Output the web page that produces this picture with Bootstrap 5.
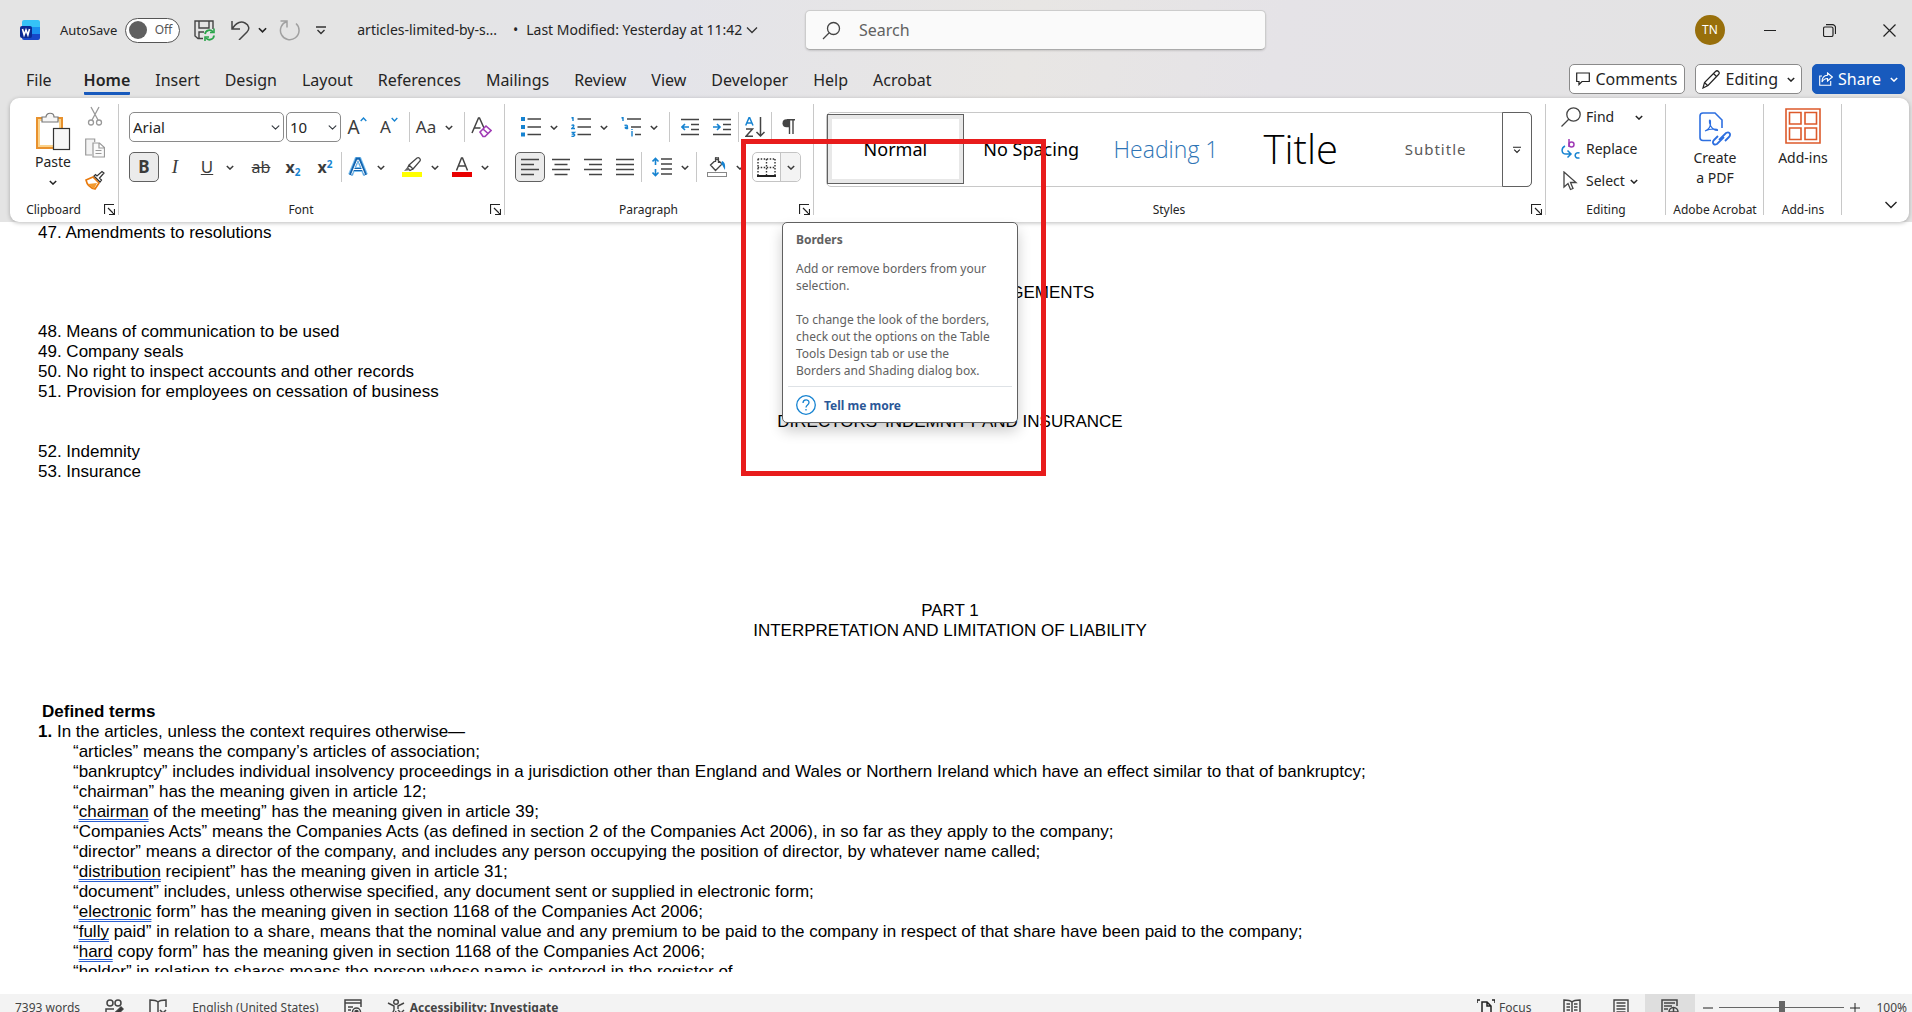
<!DOCTYPE html>
<html lang="en">
<head>
<meta charset="utf-8">
<meta name="viewport" content="width=device-width, initial-scale=1">
<title>Word</title>
<link href="https://cdn.jsdelivr.net/npm/bootstrap@5.3.0/dist/css/bootstrap.min.css" rel="stylesheet">
<style>
:root{--ink:#242424;--line:#c8c8c8;--blue:#1683d1}
body{font-family:"Noto Sans","Open Sans",sans-serif;font-size:14px;line-height:20px;color:var(--ink);background:#fff;overflow:hidden}
button,a.tabl{color:inherit;text-decoration:none}
button{background:none;border:0;padding:0;display:inline-flex;align-items:center;justify-content:center}
svg{display:block;flex:none;fill:none;stroke:#444}
.chrome{background:linear-gradient(100deg,#e4e4e4 0,#e4e4e4 18%,#e4e4e9 35%,#e8e6e4 53%,#e5e3e7 66%,#e3e3e3 92%)}
.titlebar{height:60px}
.title-left{width:42.1%;height:60px;padding-left:20px;white-space:nowrap}
.f13{font-size:13px}
.switchpill{width:55px;height:25px;border:1px solid #555;border-radius:13px;background:#fff;padding:0 7px 0 3px;font-size:12px;color:#555}
.switchpill input{appearance:none;width:18px;height:18px;border-radius:50%;background:#606060;margin:0}
.qat{margin-left:14px;gap:8px}
.filename{margin-left:31px}
.searchbox{width:24.1%;height:40px;margin-top:10px;border:1px solid #ccc;border-bottom-color:#aaa;border-radius:5px;background:#fafafa;padding-left:16px;box-shadow:0 1px 2px #0002}
.searchbox input{border:0;background:none;outline:0;font-size:16px;color:#616161;width:100%}
.searchbox input::placeholder{color:#616161}
.winbtns{gap:47px;height:60px;margin-right:16px}
.avatar{width:30px;height:30px;border-radius:50%;background:#986f0b;color:#fff;font-size:12px;margin-right:-8px}
.tabbar{height:38px;padding:0 7px 0 26px}
.tabl{display:block;font-size:16px;line-height:24px;padding:8px 0 0;border-bottom:3px solid transparent}
.tabs-list{gap:25px}
.tabl.first{margin-right:7px}
.tabl.current{border-bottom-color:#185abd;font-weight:600;border-radius:1px}
.topbtn{height:30px;border:1px solid #8a8a8a;border-radius:5px;background:#fff;font-size:16px;gap:5px;padding:0 6px}
.topbtn.share{background:#185abd;border-color:#185abd;color:#fff}
.topbtn.share svg{stroke:#fff}
.ribbon{margin:0 3px 0 10px;background:#fff;border-radius:9px;height:124px;box-shadow:0 1px 4px #0004}
.grp{position:relative;padding:14px 0 0 10px;display:flex;flex-direction:column}
.grp::after{content:"";position:absolute;right:0;top:6px;height:111px;width:1px;background:var(--line)}
.grp-label{margin-top:auto;height:25px;font-size:12px;line-height:26px;text-align:center;padding-right:10px;white-space:nowrap}
.grp-label.wl{padding-right:32px}
.launch{position:absolute;right:4px;bottom:7px}
.toolrow{display:flex;height:30px;color:#3b3b3b}
.toolrow + .toolrow{margin-top:10px}
.tool{width:32px;height:30px;font-size:19px}
.tool.t17{font-size:17px}
.tool.t16{font-size:16px}
.tool sub,.tool sup{color:#1683d1;font-size:10px}
.chv{width:14px;height:30px}
.sep{width:1px;background:var(--line);height:30px}
.pressed{width:30px;border:1px solid #616161;border-radius:5px;background:#ebebeb}
.combo{height:30px;border:1px solid #8a8a8a;border-radius:5px;font-size:15px;padding:0 18px 0 3px;background-position:right 3px center;background-size:9px 9px;color:var(--ink);line-height:28px}
.w-clip{width:109px}.w-font{width:386px}.w-para{width:309px}.w-edit{width:120px}.w-acro{width:98px}.w-addin{width:78px}.w-end{width:67px}
.combo.face{width:155px}.combo.size{width:55px;margin-left:2px}
.cliprow{margin-top:-6px;padding:0 14px 0 15px}
.gallery{height:75px;border:1px solid var(--line);border-radius:5px;margin-right:14px;display:flex;margin-left:2px}
.gallery .sty{flex:1 1 0;min-width:0;color:#000;font-size:18px;white-space:nowrap;margin:1px 0 2px}
.sty.chosen{border:1px solid #616161;box-shadow:inset 0 0 0 4px #e8e8e8}
.gallery .h1s{font-family:"Open Sans",sans-serif;font-weight:300;font-size:23px;color:#2e74b5}
.gallery .tts{font-family:"Open Sans",sans-serif;font-weight:300;font-size:40px}
.gallery .sbs{font-size:15px;color:#5a5a5a;letter-spacing:1px}
.more{width:30px;border:1px solid #616161;border-radius:0 5px 5px 0;margin:-1px}
.editlist{margin-top:-11px;padding-left:5px}
.editcmd{height:32px;gap:5px;display:flex;justify-content:flex-start}
.tipcard{position:absolute;left:29px;top:69px;width:236px;height:201px;z-index:5;background:#fff;border:1px solid #616161;border-radius:5px;box-shadow:0 8px 14px #0003;font-size:12px;line-height:17px;color:#616161;padding:8px 5px 0}
.tipcard p{margin:0 8px 17px;white-space:nowrap}
.tipcard .tiphead{margin-bottom:12px}
.tipcard .tipend{margin-bottom:7px}
.tiplink{color:#2b5797}
.marker{position:absolute;left:-12px;top:-14px;width:305px;height:337px;border:5px solid #e81c1c;z-index:6;pointer-events:none}
.splitb{position:relative;border:1px solid #c4c4c4;border-radius:5px;display:flex;width:49px;height:30px;margin-left:5px}
.splitb .sp2{border-left:1px solid #c4c4c4;width:20px;background:#f3f3f3;border-radius:0 5px 5px 0}
.splitb .sp1{width:28px}
.docpane{flex:1 1 auto;min-height:0;overflow:hidden;margin-bottom:22px;padding:1px 50px 0 38px;font-family:"Liberation Sans",Arial,sans-serif;font-size:17px;line-height:20px;color:#000}
.docpane p,.docpane h2{margin:0;font-size:17px;line-height:20px;white-space:nowrap;font-weight:400}
.docpane .terms{padding-left:35px}
.gap10{height:10px}.gap20{height:19px}.gap40{height:40px}.gap60{height:61px}.gap120{height:119px}
.gram{text-decoration:underline double #2b5fd0 1px;text-underline-offset:2px;text-decoration-skip-ink:none}
.statusbar{height:18px;overflow:hidden;background:#f3f3f3;flex:none;font-size:12px;color:#444}
.statusin{height:27px;padding:0 5px 0 15px}
.statusin span{white-space:nowrap}
.zoomr{appearance:none;width:125px;height:14px;background:linear-gradient(#666,#666) center/100% 1px no-repeat;margin:0 6px}
.zoomr::-webkit-slider-thumb{appearance:none;width:6px;height:14px;background:#666}
.viewon{background:#dedede;width:50px;height:27px}
.viewgap{margin-left:32px}
.statgap{margin-left:25px}
</style>
</head>
<body class="d-flex flex-column vh-100">
<svg width="0" height="0" class="position-absolute">
<symbol id="cv" viewBox="0 0 10 6"><path d="M1 1l4 4 4-4" stroke-width="1.8" stroke="currentColor" fill="none"/></symbol>
<symbol id="dl" viewBox="0 0 11 11"><path d="M.5 10V.5H10M4 4l6 6M10.500 5v5.500H5" stroke="#222" stroke-width="1.200"/></symbol>
</svg>
<header class="chrome">
 <div class="titlebar d-flex align-items-start">
  <div class="title-left d-flex align-items-center">
   <svg width="20" height="20" viewBox="0 0 20 20"><path d="M4 0h14a2 2 0 012 2v5H2V2a2 2 0 012-2z" fill="#35c3f7" stroke="none"/><path d="M2 7h18v7H2z" fill="#1b90ef" stroke="none"/><path d="M2 14h18v4a2 2 0 01-2 2H4a2 2 0 01-2-2z" fill="#1747c8" stroke="none"/><rect y="6" width="12" height="12" rx="2" fill="#0a2a93" stroke="none"/><path d="M2.500 9l1.600 6L6 10l1.900 5 1.600-6" stroke="#fff" stroke-width="1.600"/></svg>
   <label class="f13 ms-3 ps-1" for="asave">AutoSave</label>
   <label class="switchpill d-flex align-items-center justify-content-between ms-2" for="asave"><input type="checkbox" id="asave">Off</label>
   <div class="qat d-flex align-items-center">
    <button aria-label="Save"><svg width="21" height="21" viewBox="0 0 21 21" stroke-width="1.400"><path d="M9 18.500H4L1 16V1h18v8M5 1v7h10V1M5 18v-6h5"/><path d="M11 14a4.500 4.500 0 018-2M20 15.500a4.500 4.500 0 01-8 2.500" stroke="#2aa54a" stroke-width="1.800"/><path d="M20 8.500v4h-4M11 21v-4h4" stroke="#2aa54a" stroke-width="1.600"/></svg></button>
    <button class="ms-2" aria-label="Undo"><svg width="19" height="20" viewBox="0 0 19 20" stroke-width="1.500"><path d="M1 1v8h8M1 9C5 3 10 1 14 3c4 2 5 6 2 9l-8 8"/></svg></button>
    <button aria-label="Undo list"><svg width="9" height="6"><use href="#cv"/></svg></button>
    <button class="ms-1" aria-label="Redo"><svg width="21" height="21" viewBox="0 0 21 21" style="stroke:#a0a0a0" stroke-width="1.500"><path d="M1.500 1h6.500v6.500M8 1.500A9.300 9.300 0 1017 3.500"/></svg></button>
    <button class="ms-2" aria-label="Customize toolbar"><svg width="10" height="9" viewBox="0 0 10 9"><path d="M0 1h10M1.500 4L5 7.500 8.500 4" stroke="#333" stroke-width="1.400"/></svg></button>
   </div>
   <span class="filename">articles-limited-by-s...</span>
   <span class="ms-3">•</span><span class="ms-2">Last Modified: Yesterday at 11:42</span>
   <svg class="ms-1" width="12" height="8" viewBox="0 0 12 8"><path d="M1 1.500l5 5 5-5" stroke="#333" stroke-width="1.300"/></svg>
  </div>
  <div class="searchbox d-flex align-items-center">
   <svg class="me-3" width="19" height="19" viewBox="0 0 19 19" stroke-width="1.300"><circle cx="11.500" cy="7.500" r="6"/><path d="M7 12l-6 6"/></svg>
   <input type="search" aria-label="Search" placeholder="Search">
  </div>
  <div class="winbtns ms-auto d-flex align-items-center">
   <button class="avatar" aria-label="Account">TN</button>
   <button aria-label="Minimize"><svg width="12" height="13" viewBox="0 0 12 13"><path d="M0 6.500h12" stroke="#222"/></svg></button>
   <button aria-label="Restore"><svg width="13" height="13" viewBox="0 0 13 13"><rect x=".5" y="3" width="9.500" height="9.500" rx="1.500" stroke="#222" stroke-width="1.200"/><path d="M3 .7h6.500a3 3 0 013 3V10" stroke="#222" stroke-width="1.200"/></svg></button>
   <button aria-label="Close"><svg width="13" height="13" viewBox="0 0 13 13"><path d="M.5.5l12 12M12.500.5l-12 12" stroke="#222" stroke-width="1.200"/></svg></button>
  </div>
 </div>
 <div class="tabbar d-flex">
  <nav class="tabs-list d-flex align-items-start">
   <a class="tabl first" href="#">File</a><a class="tabl current" href="#">Home</a><a class="tabl" href="#">Insert</a><a class="tabl" href="#">Design</a><a class="tabl" href="#">Layout</a><a class="tabl" href="#">References</a><a class="tabl" href="#">Mailings</a><a class="tabl" href="#">Review</a><a class="tabl" href="#">View</a><a class="tabl" href="#">Developer</a><a class="tabl" href="#">Help</a><a class="tabl" href="#">Acrobat</a>
  </nav>
  <div class="ms-auto d-flex pt-1" style="gap:10px">
   <button class="topbtn"><svg width="14" height="14" viewBox="0 0 14 14"><path d="M.7 1h12.600v8.500H6L3 12.500v-3H.7z" stroke="#222" stroke-width="1.200"/></svg>Comments</button>
   <button class="topbtn"><svg width="19" height="19" viewBox="0 0 19 19"><path d="M1 18l1.500-5.500L13.500 1.500c1-1 2-1 3 0s1 2 0 3L6 15.500zM11.500 3.500l3.500 3.500M2.500 12.500L6 16" stroke="#222" stroke-width="1.200"/></svg>Editing <svg class="ms-1" width="8" height="5"><use href="#cv"/></svg></button>
   <button class="topbtn share"><svg width="14" height="14" viewBox="0 0 14 14"><path d="M3 4H.7v9.300h11V9M8.500 1l4.800 4-4.800 4V6.500C6 6.500 4 8 3 10c0-4 2-6.500 5.500-6.700z" stroke-width="1.100"/></svg>Share <svg class="ms-1" width="8" height="5"><use href="#cv"/></svg></button>
  </div>
 </div>
 <main class="ribbon d-flex">
  <section class="grp w-clip">
   <div class="cliprow d-flex justify-content-between">
    <button class="flex-column"><svg width="36" height="40" viewBox="0 0 36 40"><path d="M2 6h25v30H2z" fill="#fff" stroke="#e8912d" stroke-width="2"/><path d="M4 8h21v26H4z" stroke="#fbd28a" stroke-width="2"/><path d="M7 10V5h4c0-5 8-5 8 0h4v5z" fill="#f6f6f6" stroke="#777" stroke-width="1.200"/><rect x="18.500" y="16.500" width="16" height="21" fill="#f7f7f7" stroke="#333" stroke-width="1.200"/></svg><span>Paste</span><svg class="mt-2" width="8" height="5"><use href="#cv"/></svg></button>
    <div class="d-flex flex-column" style="gap:12px">
     <button aria-label="Cut"><svg width="20" height="20" viewBox="0 0 20 20" style="stroke:#999" stroke-width="1.300"><path d="M6 1l7 13M14 1L7 14"/><circle cx="6" cy="16.500" r="2.500"/><circle cx="14" cy="16.500" r="2.500"/></svg></button>
     <button aria-label="Copy"><svg width="20" height="20" viewBox="0 0 20 20" style="stroke:#999" stroke-width="1.200"><path d="M7 17H.7V1h9v3" fill="#f3f3f3"/><path d="M8 5h6.500l5 4.500V19H8zM14 5v5h5M10.500 12.500h6M10.500 15.500h6" fill="#fafafa"/></svg></button>
     <button aria-label="Format Painter"><svg width="20" height="20" viewBox="0 0 20 20"><path d="M1 10l7-3 6 6-4 6C6 18 2 15 1 10z" fill="#fff" stroke="#e8790c" stroke-width="1.600"/><path d="M3 14l9-1-3 6z" fill="#f39a2e" stroke="none"/><path d="M9 6l6 6 1.500-2-2-2L19 3l-2-1.500L12 6l-1.500-1.500z" fill="#fff" stroke="#333" stroke-width="1.200"/></svg></button>
    </div>
   </div>
   <div class="grp-label wl">Clipboard</div>
   <button class="launch" aria-label="Clipboard settings"><svg width="11" height="11"><use href="#dl"/></svg></button>
  </section>
  <section class="grp w-font">
   <div class="toolrow">
    <select class="form-select combo face" aria-label="Font"><option>Arial</option></select>
    <select class="form-select combo size" aria-label="Font size"><option>10</option></select>
    <button class="tool" aria-label="Grow font"><span>A</span><svg class="mb-3" width="7" height="5" viewBox="0 0 10 6"><path d="M1 5l4-4 4 4" stroke="#1683d1" stroke-width="2"/></svg></button>
    <button class="tool t17" aria-label="Shrink font"><span>A</span><svg class="mb-3" width="7" height="5" viewBox="0 0 10 6"><path d="M1 1l4 4 4-4" stroke="#1683d1" stroke-width="2"/></svg></button>
    <span class="sep ms-1"></span>
    <button class="tool t17">Aa</button><button class="chv" aria-label="Case"><svg width="8" height="5"><use href="#cv"/></svg></button>
    <span class="sep ms-2"></span>
    <button class="tool" aria-label="Clear formatting"><svg width="21" height="22" viewBox="0 0 21 22"><path d="M1 17L7.500 2h1L13 12M3.500 12h6" stroke-width="1.500"/><path d="M9 16l6-6 5 4.500-6 6h-2zM12 13l5 4.500" stroke="#a03bb5" stroke-width="1.600" fill="#fff"/></svg></button>
   </div>
   <div class="toolrow">
    <button class="tool t17 pressed fw-bold">B</button>
    <button class="tool fst-italic" style="font-family:'Liberation Serif',serif">I</button>
    <button class="tool t17 text-decoration-underline">U</button><button class="chv" aria-label="Underline style"><svg width="8" height="5"><use href="#cv"/></svg></button>
    <button class="tool t16 text-decoration-line-through ms-2">ab</button>
    <button class="tool t16 fw-bold"><span>x<sub>2</sub></span></button>
    <button class="tool t16 fw-bold"><span>x<sup>2</sup></span></button>
    <span class="sep"></span>
    <button class="tool" aria-label="Text effects"><svg width="20" height="20" viewBox="0 0 20 20"><path d="M2.500 18L9 2h2l6.500 16M5.500 12.500h9" stroke="#7cc0f0" stroke-width="5"/><path d="M2.500 18L9 2h2l6.500 16M5.500 12.500h9" stroke="#1264b0" stroke-width="3"/><path d="M3.500 17.500L9.500 3h1l6 14.500M5.500 12.500h9" stroke="#fff" stroke-width="1"/></svg></button><button class="chv" aria-label="Effects list"><svg width="8" height="5"><use href="#cv"/></svg></button>
    <button class="tool ms-2" aria-label="Highlight"><svg width="20" height="20" viewBox="0 0 20 20"><path d="M0 15h20v5H0z" fill="#ff0" stroke="none"/><path d="M7 8l8-7c2-1 4 1 3 3l-7 8zM7 8l-1.500 3 2.500 2.500 3-1.500" fill="#fff" stroke-width="1.300"/><path d="M5.500 10l3 3L2 14z" fill="#666" stroke="none"/></svg></button><button class="chv" aria-label="Highlight list"><svg width="8" height="5"><use href="#cv"/></svg></button>
    <button class="tool ms-1" aria-label="Font colour"><svg width="20" height="20" viewBox="0 0 20 20"><path d="M0 15h20v5H0z" fill="#e80000" stroke="none"/><path d="M4.500 13.500L9.500 1h1l5 12.500M6.500 9h7" stroke-width="1.500"/></svg></button><button class="chv" aria-label="Colour list"><svg width="8" height="5"><use href="#cv"/></svg></button>
   </div>
   <div class="grp-label wl">Font</div>
   <button class="launch" aria-label="Font settings"><svg width="11" height="11"><use href="#dl"/></svg></button>
  </section>
  <section class="grp w-para">
   <div class="toolrow">
    <button class="tool" aria-label="Bullets"><svg width="20" height="20" viewBox="0 0 20 20" stroke-width="1.400"><path d="M0 0h4v4H0zM0 8h4v4H0zM0 15.500h4v4H0z" fill="#1683d1" stroke="none"/><path d="M6.500 2H20M6.500 10H20M6.500 17.500H20"/></svg></button><button class="chv" aria-label="Bullet list"><svg width="8" height="5"><use href="#cv"/></svg></button>
    <button class="tool ms-1" aria-label="Numbering"><svg width="20" height="20" viewBox="0 0 20 20" stroke-width="1.400"><path d="M.5 1L2 .5V4M.5 8.500C3 7 4 9 .7 11.500H4M.5 15.500h3L2 17c3 0 1.500 3-1.500 2.300" stroke="#1683d1"/><path d="M6.500 2H20M6.500 10H20M6.500 17.500H20"/></svg></button><button class="chv" aria-label="Number list"><svg width="8" height="5"><use href="#cv"/></svg></button>
    <button class="tool ms-1" aria-label="Multilevel list"><svg width="20" height="20" viewBox="0 0 20 20" stroke-width="1.400"><path d="M.5 1L2 .5V4M3.500 8.500c3-1 3 0 3 3-3 .5-3-2 0-1.500M11 14v5.500M11 12v1" stroke="#1683d1"/><path d="M6 2h14M10 10h10M14 17.500h6"/></svg></button><button class="chv" aria-label="Multilevel styles"><svg width="8" height="5"><use href="#cv"/></svg></button>
    <span class="sep ms-2 me-1"></span>
    <button class="tool" aria-label="Decrease indent"><svg width="18" height="18" viewBox="0 0 18 18" stroke-width="1.400"><path d="M0 1.500h18M10 6.500h8M10 11.500h8M0 16.500h18"/><path d="M8 9H1M4 6L1 9l3 3" stroke="#1683d1" stroke-width="1.600"/></svg></button>
    <button class="tool" aria-label="Increase indent"><svg width="18" height="18" viewBox="0 0 18 18" stroke-width="1.400"><path d="M0 1.500h18M10 6.500h8M10 11.500h8M0 16.500h18"/><path d="M0 9h7M4 6l3 3-3 3" stroke="#1683d1" stroke-width="1.600"/></svg></button>
    <span class="sep"></span>
    <button class="tool" aria-label="Sort"><svg width="20" height="20" viewBox="0 0 20 20" stroke-width="1.500"><path d="M.7 8.500L4 .8h.7L8 8.500M2 6h5" stroke="#1683d1"/><path d="M1 12h6.500L1 19.300h7M15.500 0v19M11.500 15l4 4 4-4"/></svg></button>
    <span class="sep"></span>
    <button class="tool" aria-label="Show marks"><svg width="13" height="16" viewBox="0 0 13 16"><path d="M7.500 1v14M11 1v14M13 .8H5" stroke-width="1.400"/><path d="M7.500.3H4.500a4 4 0 000 8h3z" fill="#444" stroke="none"/></svg></button>
   </div>
   <div class="toolrow">
    <button class="tool pressed" aria-label="Align left"><svg width="18" height="18" viewBox="0 0 18 18" stroke-width="1.400"><path d="M0 1.500h18M0 6.500h13M0 11.500h18M0 16.500h13"/></svg></button>
    <button class="tool" aria-label="Center"><svg width="18" height="18" viewBox="0 0 18 18" stroke-width="1.400"><path d="M0 1.500h18M2.500 6.500h13M0 11.500h18M2.500 16.500h13"/></svg></button>
    <button class="tool" aria-label="Align right"><svg width="18" height="18" viewBox="0 0 18 18" stroke-width="1.400"><path d="M0 1.500h18M5 6.500h13M0 11.500h18M5 16.500h13"/></svg></button>
    <button class="tool" aria-label="Justify"><svg width="18" height="18" viewBox="0 0 18 18" stroke-width="1.400"><path d="M0 1.500h18M0 6.500h18M0 11.500h18M0 16.500h18"/></svg></button>
    <span class="sep"></span>
    <button class="tool ms-1" aria-label="Line spacing"><svg width="20" height="20" viewBox="0 0 20 20" stroke-width="1.400"><path d="M9 2h11M9 7h11M9 12h11M9 17h11"/><path d="M3.500 2v6M.5 4.500l3-3 3 3M3.500 12v6M.5 15.500l3 3 3-3" stroke="#1683d1" stroke-width="1.600"/></svg></button><button class="chv" aria-label="Spacing list"><svg width="8" height="5"><use href="#cv"/></svg></button>
    <span class="sep ms-1 me-1"></span>
    <button class="tool" aria-label="Shading"><svg width="20" height="20" viewBox="0 0 20 20"><rect x=".5" y="15.500" width="19" height="4" fill="#fff" stroke="#888"/><path d="M3.500 8L10 2l5 5-6.500 6.500zM8.500 5V1c1.500-2 3-1 3 1v4" stroke-width="1.300"/><path d="M15 4c3 1 3.500 4 3 9-1.500-2-2-5-4-6z" fill="#1683d1" stroke="none"/></svg></button><button class="chv" aria-label="Shading list"><svg width="8" height="5"><use href="#cv"/></svg></button>
    <div class="splitb">
     <button class="sp1" aria-label="Borders"><svg width="19" height="19" viewBox="0 0 19 19"><path d="M.7 1H18.500M.7 9.500H18.500M1 1v16M9.500 1v16M18 1v16" stroke="#333" stroke-width="1.400" stroke-dasharray="1.500 1.500"/><path d="M0 18h19" stroke="#222" stroke-width="2"/></svg></button><button class="sp2" aria-label="Border list"><svg width="8" height="5"><use href="#cv"/></svg></button>
     <aside class="tipcard" role="tooltip">
      <p class="tiphead fw-bold">Borders</p>
      <p>Add or remove borders from your<br>selection.</p>
      <p class="tipend">To change the look of the borders,<br>check out the options on the Table<br>Tools Design tab or use the<br>Borders and Shading dialog box.</p>
      <div class="border-top d-flex align-items-center pt-2 ps-2"><svg width="20" height="20" viewBox="0 0 20 20"><circle cx="10" cy="10" r="9.300" stroke="#1683d1" stroke-width="1.300"/><path d="M7 8c0-4 6-4 6-.5 0 2.500-3 2.500-3 5M10 14v1.500" stroke="#1683d1" stroke-width="1.300"/></svg><a href="#" class="tiplink fw-bold text-decoration-none ms-2">Tell me more</a></div>
     </aside>
     <div class="marker"></div>
    </div>
   </div>
   <div class="grp-label wl">Paragraph</div>
   <button class="launch" aria-label="Paragraph settings"><svg width="11" height="11"><use href="#dl"/></svg></button>
  </section>
  <section class="grp flex-fill">
   <div class="gallery">
    <button class="sty chosen">Normal</button><button class="sty">No Spacing</button><button class="sty h1s">Heading 1</button><button class="sty tts">Title</button><button class="sty sbs">Subtitle</button>
    <button class="more" aria-label="More styles"><svg width="8" height="8" viewBox="0 0 10 9"><path d="M0 1h10M1.500 4L5 7.500 8.500 4" stroke="#222" stroke-width="1.400"/></svg></button>
   </div>
   <div class="grp-label wl">Styles</div>
   <button class="launch" aria-label="Style settings"><svg width="11" height="11"><use href="#dl"/></svg></button>
  </section>
  <section class="grp w-edit">
   <div class="editlist">
    <button class="editcmd"><svg width="20" height="20" viewBox="0 0 20 20"><circle cx="12.500" cy="7.500" r="6.700" stroke-width="1.300"/><path d="M8 12l-7.500 7.500" stroke-width="1.300"/></svg>Find <svg class="ms-3" width="8" height="5"><use href="#cv"/></svg></button>
    <button class="editcmd"><svg width="20" height="20" viewBox="0 0 20 20"><path d="M8 0v8" stroke="#a03bb5" stroke-width="1.500"/><circle cx="10.500" cy="5.500" r="2.500" stroke="#a03bb5" stroke-width="1.500"/><path d="M4 7c-4 2-4 8 1 8h4M6.500 11.500l3.500 3.500-3.500 3.500M18.500 14c-5-2-6.500 6 0 5" stroke="#1683d1" stroke-width="1.500"/></svg>Replace</button>
    <button class="editcmd"><svg width="20" height="20" viewBox="0 0 20 20"><path d="M3 1v15l4-3.500 2.500 6 2.500-1-2.500-6H15z" stroke-width="1.300"/></svg>Select <svg width="8" height="5"><use href="#cv"/></svg></button>
   </div>
   <div class="grp-label">Editing</div>
  </section>
  <section class="grp w-acro ps-0">
   <button class="flex-column"><svg width="32" height="36" viewBox="0 0 32 36"><path d="M12 28.500H4a3 3 0 01-3-3V4a3 3 0 013-3h12l7 7v8" stroke="#2d6fe0" stroke-width="1.600"/><path d="M6 19c5-2 6-6 5.500-10-1-3-2 1 0 4.500 2 4 4 5 7 5 1-2-7-2-12.500.5z" stroke="#2d6fe0" stroke-width="1.100"/><path d="M20 28l7-7c4-2 5 2 3 4l-4 4M25 25l-7 7c-4 2-5-2-3-4l4-4" stroke="#2d6fe0" stroke-width="1.800"/></svg>
   <span>Create<br>a PDF</span></button>
   <div class="grp-label p-0">Adobe Acrobat</div>
  </section>
  <section class="grp w-addin ps-0" style="padding-top:10px">
   <button class="flex-column"><svg width="36" height="36" viewBox="0 0 36 36" style="stroke:#dd5a2b" stroke-width="1.600"><path d="M1 1h34v34H1zM4.500 4.500h11.500v11.500H4.500zM20 4.500h11.500v11.500H20zM4.500 20h11.500v11.500H4.500zM20 20h11.500v11.500H20z"/></svg>
   <span class="pt-1">Add-ins</span></button>
   <div class="grp-label p-0">Add-ins</div>
  </section>
  <div class="w-end d-flex align-items-end justify-content-end" style="padding:0 12px 13px 0"><button aria-label="Collapse ribbon"><svg width="12" height="8" viewBox="0 0 12 8"><path d="M.5 1L6 6.500 11.500 1" stroke="#222" stroke-width="1.400"/></svg></button></div>
 </main>
</header>
<article class="docpane">
 <p>47. Amendments to resolutions</p>
 <div class="gap40"></div>
 <h2 class="text-center">ADMINISTRATIVE ARRANGEMENTS</h2>
 <div class="gap20"></div>
 <p>48. Means of communication to be used</p>
 <p>49. Company seals</p>
 <p>50. No right to inspect accounts and other records</p>
 <p>51. Provision for employees on cessation of business</p>
 <div class="gap10"></div>
 <h2 class="text-center">DIRECTORS’ INDEMNITY AND INSURANCE</h2>
 <div class="gap10"></div>
 <p>52. Indemnity</p>
 <p>53. Insurance</p>
 <div class="gap120"></div>
 <h2 class="text-center">PART 1<br>INTERPRETATION AND LIMITATION OF LIABILITY</h2>
 <div class="gap60"></div>
 <p class="ps-1 fw-bold">Defined terms</p>
 <p><b>1.</b> In the articles, unless the context requires otherwise—</p>
 <div class="terms">
 <p>“articles” means the company’s articles of association;</p>
 <p>“bankruptcy” includes individual insolvency proceedings in a jurisdiction other than England and Wales or Northern Ireland which have an effect similar to that of bankruptcy;</p>
 <p>“chairman” has the meaning given in article 12;</p>
 <p>“<span class="gram">chairman</span> of the meeting” has the meaning given in article 39;</p>
 <p>“Companies Acts” means the Companies Acts (as defined in section 2 of the Companies Act 2006), in so far as they apply to the company;</p>
 <p>“director” means a director of the company, and includes any person occupying the position of director, by whatever name called;</p>
 <p>“<span class="gram">distribution</span> recipient” has the meaning given in article 31;</p>
 <p>“document” includes, unless otherwise specified, any document sent or supplied in electronic form;</p>
 <p>“<span class="gram">electronic</span> form” has the meaning given in section 1168 of the Companies Act 2006;</p>
 <p>“<span class="gram">fully</span> paid” in relation to a share, means that the nominal value and any premium to be paid to the company in respect of that share have been paid to the company;</p>
 <p>“<span class="gram">hard</span> copy form” has the meaning given in section 1168 of the Companies Act 2006;</p>
 <p>“holder” in relation to shares means the person whose name is entered in the register of</p>
 </div>
</article>
<footer class="statusbar">
 <div class="statusin d-flex align-items-center">
  <span>7393 words</span>
  <svg class="statgap" width="19" height="18" viewBox="0 0 19 18" stroke-width="1.500"><circle cx="5" cy="4" r="3"/><circle cx="13" cy="4" r="3"/><path d="M1 14v-4h8M1 13c2 4 7 3 9 1l7-5"/><path d="M8 16l8-8 2 2-8 8z" fill="#333"/></svg>
  <svg class="statgap" width="18" height="18" viewBox="0 0 18 18" stroke-width="1.500"><path d="M9 17V3C7 1 4 1 1 1v14h8M9 3c2-2 5-2 8-2v7M11 11l6 6M17 11l-6 6"/></svg>
  <span class="statgap">English (United States)</span>
  <svg class="statgap" width="18" height="18" viewBox="0 0 18 18" stroke-width="1.500"><path d="M17 8V1H1v15h6M1 4h16M4 8h5M4 11h3"/><circle cx="12.500" cy="13" r="4"/><circle cx="12.500" cy="13" r="1.500" fill="#333"/></svg>
  <svg class="statgap" width="19" height="18" viewBox="0 0 19 18" stroke-width="1.400"><circle cx="9" cy="3" r="2.300"/><path d="M1 4l6 3v4l-3 6M17 4l-6 3v3M9 12l-2 5M11 11l6 6M17 11l-6 6"/></svg>
  <span class="fw-bold ms-1">Accessibility: Investigate</span>
  <div class="ms-auto d-flex align-items-center">
   <svg width="18" height="18" viewBox="0 0 18 18" stroke-width="1.500" style="stroke:#222"><path d="M0 4V1h3M15 1h3v3M0 14v3h3M15 17h3v-3M5 3h5l4 4v9H5zM10 3v4h4"/></svg><span class="ms-1">Focus</span>
   <svg class="viewgap" width="18" height="18" viewBox="0 0 18 18" stroke-width="1.500"><path d="M9 3C7 1 4 1 1 1v14c4 0 6 0 8 2 2-2 4-2 8-2V1c-3 0-6 0-8 2v14M3.500 5H7M3.500 8H7M3.500 11H7M11 5h3.500M11 8h3.500M11 11h3.500"/></svg>
   <svg class="viewgap me-3" width="16" height="18" viewBox="0 0 16 18" stroke-width="1.400"><path d="M1 1h14v16H1zM3.500 4h9M3.500 7h9M3.500 10h9M3.500 13h9"/></svg>
   <button class="viewon" aria-label="Web layout"><svg width="18" height="18" viewBox="0 0 18 18" stroke-width="1.500"><path d="M16 7V1H1v14h6M3 4h11M3 7h8M3 10h4"/><circle cx="12.500" cy="13" r="4.500"/><path d="M8 13h9M12.500 9v8"/></svg></button>
   <svg class="ms-2" width="10" height="10" viewBox="0 0 10 10"><path d="M0 5h10" stroke="#222"/></svg>
   <input class="zoomr" type="range" aria-label="Zoom" min="0" max="100" value="50">
   <svg width="10" height="10" viewBox="0 0 10 10"><path d="M0 5h10M5 0v10" stroke="#222"/></svg>
   <span class="ms-3">100%</span>
  </div>
 </div>
</footer>
<script src="https://cdn.jsdelivr.net/npm/bootstrap@5.3.0/dist/js/bootstrap.bundle.min.js"></script>
</body>
</html>
